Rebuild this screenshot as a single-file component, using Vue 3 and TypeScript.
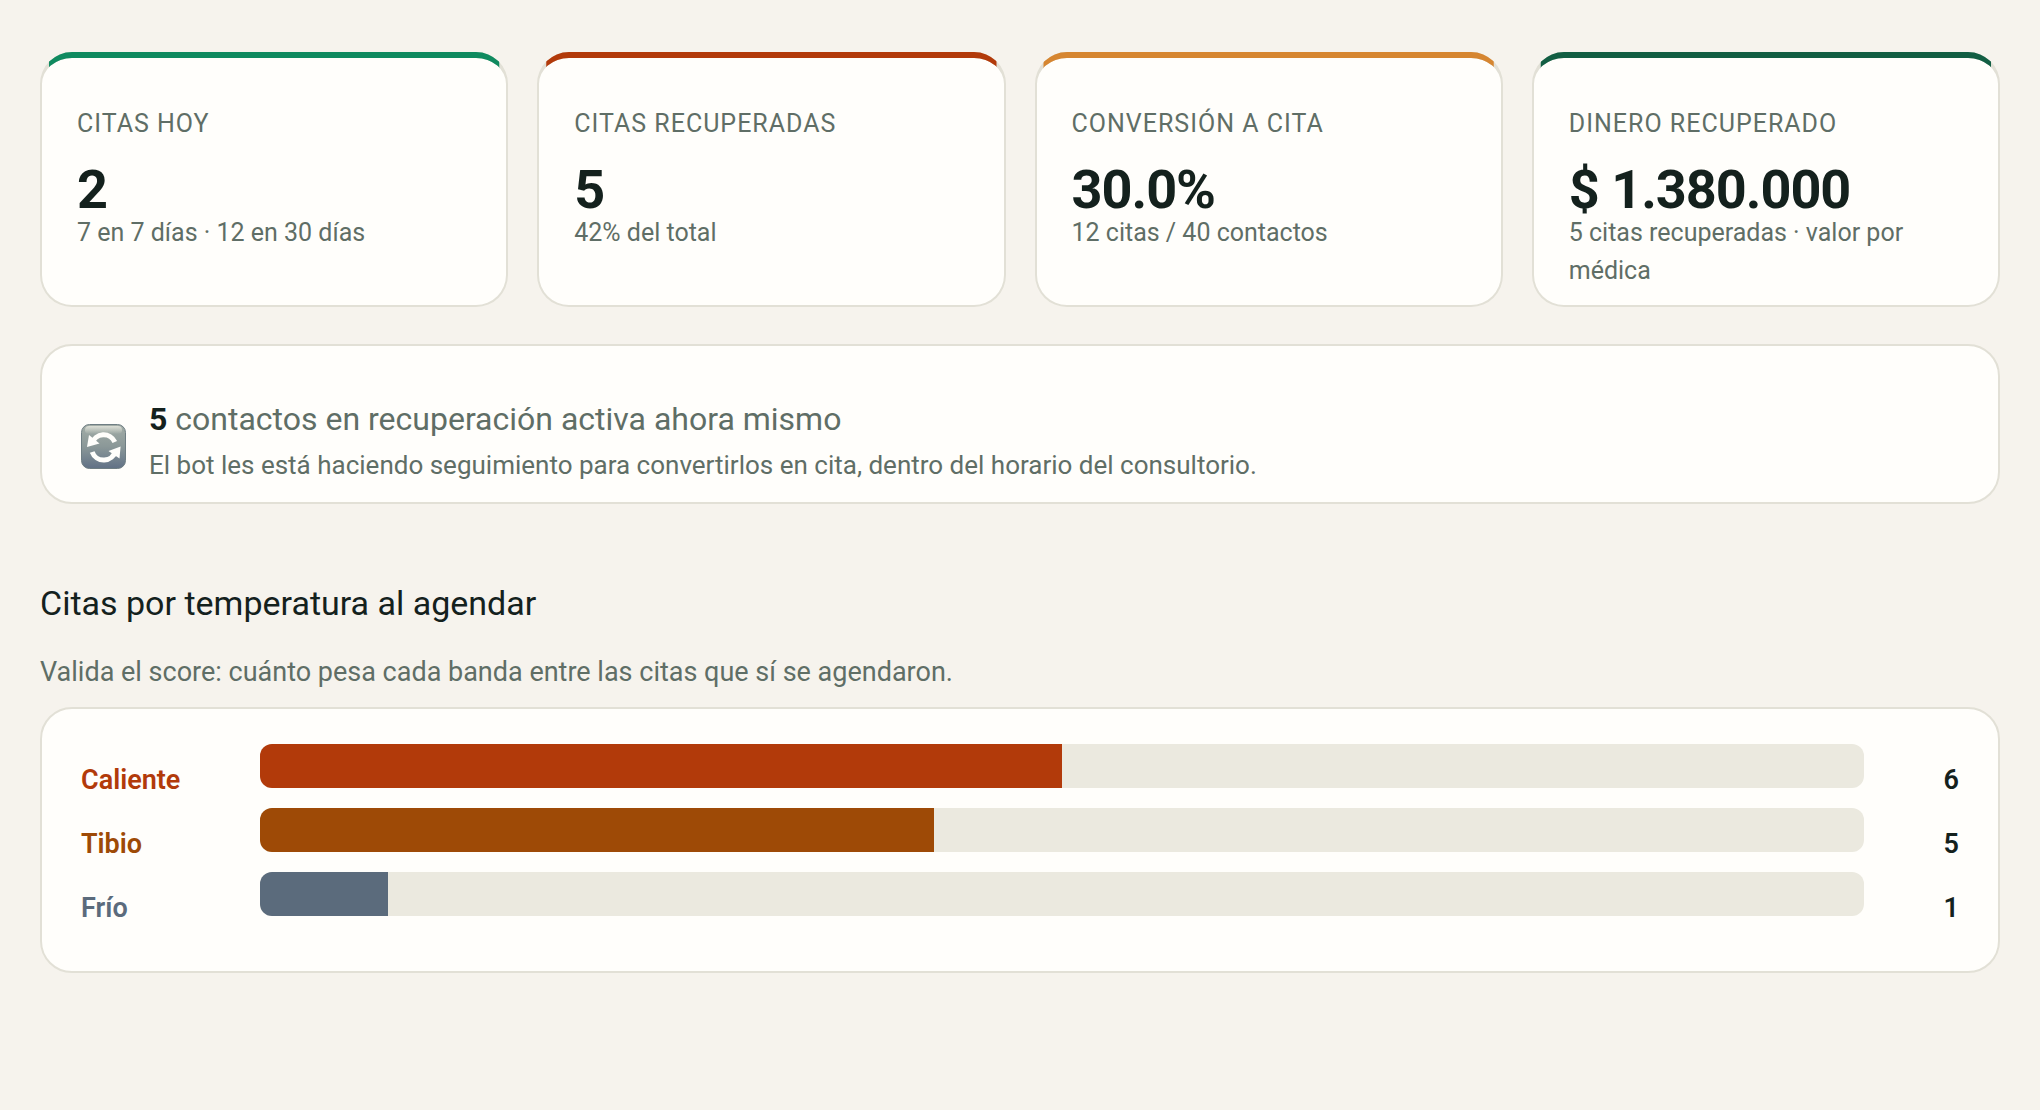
<script setup lang="ts">
interface Kpi {
  label: string
  value: string
  detail: string
  tone: 'green' | 'hot' | 'amber' | 'forest'
}

interface Band {
  name: string
  count: number
  percent: number
  tone: 'hot' | 'warm' | 'cold'
}

const kpis: Kpi[] = [
  { label: 'Citas hoy', value: '2', detail: '7 en 7 días · 12 en 30 días', tone: 'green' },
  { label: 'Citas recuperadas', value: '5', detail: '42% del total', tone: 'hot' },
  { label: 'Conversión a cita', value: '30.0%', detail: '12 citas / 40 contactos', tone: 'amber' },
  { label: 'Dinero recuperado', value: '$ 1.380.000', detail: '5 citas recuperadas · valor por médica', tone: 'forest' },
]

const bands: Band[] = [
  { name: 'Caliente', count: 6, percent: 50, tone: 'hot' },
  { name: 'Tibio', count: 5, percent: 42, tone: 'warm' },
  { name: 'Frío', count: 1, percent: 8, tone: 'cold' },
]
</script>

<template>
  <main class="page">
    <section class="kpis" aria-label="Indicadores">
      <article v-for="kpi in kpis" :key="kpi.label" class="card kpi" :class="`kpi--${kpi.tone}`">
        <h3 class="kpi__label">{{ kpi.label }}</h3>
        <p class="kpi__value">{{ kpi.value }}</p>
        <p class="kpi__detail">{{ kpi.detail }}</p>
      </article>
    </section>

    <section class="card recovery">
      <svg class="recovery__icon" viewBox="0 0 45 45" aria-hidden="true">
        <defs>
          <linearGradient id="tile" x1="0" y1="0" x2="0" y2="1">
            <stop offset="0" stop-color="#a3ada7" />
            <stop offset="0.5" stop-color="#8b9898" />
            <stop offset="1" stop-color="#617186" />
          </linearGradient>
          <linearGradient id="shine" x1="0" y1="0" x2="0" y2="1">
            <stop offset="0" stop-color="#dcdfd6" />
            <stop offset="1" stop-color="#dcdfd6" stop-opacity="0" />
          </linearGradient>
        </defs>
        <rect x="0.5" y="0.5" width="44" height="44" rx="8" fill="url(#tile)" stroke="#6f7e83" />
        <rect x="4" y="2" width="37" height="8" rx="4" fill="url(#shine)" />
        <g fill="none" stroke="#fffefb" stroke-width="5">
          <path d="M11 19.5A12.2 12.2 0 0 1 33.8 18" />
          <path d="M34.5 27A12.2 12.2 0 0 1 11.2 28" />
        </g>
        <path d="M8 11L6 23L18.5 19.5Z" fill="#fffefb" />
        <path d="M38.5 34.5L39.6 22.4L27.5 27Z" fill="#fffefb" />
      </svg>
      <div>
        <p class="recovery__title"><strong>5</strong> contactos en recuperación activa ahora mismo</p>
        <p class="recovery__text">
          El bot les está haciendo seguimiento para convertirlos en cita, dentro del horario del consultorio.
        </p>
      </div>
    </section>

    <section class="temperature">
      <h2 class="temperature__title">Citas por temperatura al agendar</h2>
      <p class="temperature__hint">Valida el score: cuánto pesa cada banda entre las citas que sí se agendaron.</p>
      <ul class="card bands">
        <li v-for="band in bands" :key="band.name" class="band" :class="`band--${band.tone}`">
          <span class="band__name">{{ band.name }}</span>
          <div class="band__track">
            <div class="band__fill" :style="{ width: `${band.percent}%` }"></div>
          </div>
          <span class="band__count">{{ band.count }}</span>
        </li>
      </ul>
    </section>
  </main>
</template>

<style>
body {
  margin: 0;
  background: #f6f3ed;
}
</style>

<style scoped>
.page {
  padding: 52px 40px;
  color: #14211d;
  font-family: Roboto, "Liberation Sans", sans-serif;
  font-size: 26px;
  line-height: 38px;
}

h2,
h3,
p,
ul {
  margin: 0;
  padding: 0;
  font-weight: 400;
}

.card {
  box-sizing: border-box;
  background: #fffefb;
  border: 2px solid #e2e0d6;
  border-radius: 32px;
}

.kpis {
  display: grid;
  grid-template-columns: repeat(4, minmax(0, 1fr));
  gap: 29px;
}

.kpi {
  position: relative;
  padding: 47px 35px 15px;
  border-top-width: 6px;
}

/* Coloured cap over the top border, ending partway round each corner. */
.kpi::before {
  content: "";
  position: absolute;
  inset: -6px -2px -2px;
  border: 2px solid;
  border-top-width: 6px;
  border-radius: 32px;
  clip-path: inset(0 9px 50%);
  pointer-events: none;
}

.kpi--green::before {
  border-color: #0f8a5f;
}

.kpi--hot::before {
  border-color: #b23a0a;
}

.kpi--amber::before {
  border-color: #d68631;
}

.kpi--forest::before {
  border-color: #125e43;
}

.kpi__label {
  margin-bottom: 23px;
  color: #5f6e66;
  font-size: 25px;
  letter-spacing: 1px;
  text-transform: uppercase;
}

.kpi__value {
  font-size: 54px;
  font-weight: 700;
  line-height: 48px;
  letter-spacing: -1px;
}

.kpi__detail {
  color: #5f6e66;
  font-size: 25px;
}

.recovery {
  display: flex;
  align-items: center;
  gap: 23px;
  margin-top: 37px;
  padding: 46px 39px 18px;
}

.recovery__icon {
  flex: none;
  width: 45px;
  height: 45px;
  margin-top: 16px;
}

.recovery__title {
  color: #5f6e66;
  font-size: 32px;
  line-height: 54px;
}

.recovery__title strong {
  color: #14211d;
  font-weight: 700;
}

.recovery__text {
  color: #5f6e66;
}

.temperature {
  margin-top: 77px;
}

.temperature__title {
  font-size: 34px;
  line-height: 44px;
}

.temperature__hint {
  margin: 28px 0 16px;
  color: #5f6e66;
  font-size: 27px;
}

.bands {
  display: grid;
  gap: 9px;
  padding: 35px 39px 44px;
  list-style: none;
}

.band {
  display: grid;
  grid-template-columns: 159px minmax(0, 1fr) 75px;
  gap: 20px;
  font-size: 27px;
}

.band__name,
.band__count {
  margin-top: 17px;
  font-weight: 600;
}

.band__count {
  text-align: right;
}

.band__track {
  height: 44px;
  overflow: hidden;
  background: #ebe9df;
  border-radius: 12px;
}

.band__fill {
  height: 100%;
}

.band--hot .band__name {
  color: #b23a0a;
}

.band--hot .band__fill {
  background: #b23a0a;
}

.band--warm .band__name {
  color: #9e4a06;
}

.band--warm .band__fill {
  background: #9e4a06;
}

.band--cold .band__name {
  color: #5b6b7c;
}

.band--cold .band__fill {
  background: #5b6b7c;
}
</style>
